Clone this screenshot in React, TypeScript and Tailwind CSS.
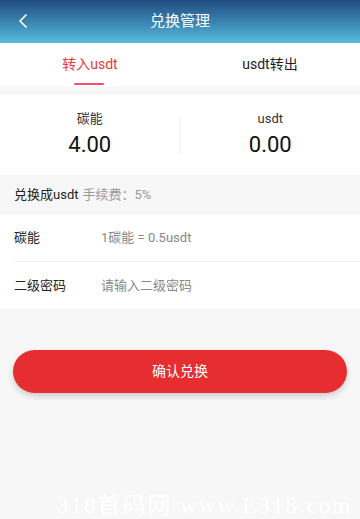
import { ChevronLeft } from 'lucide-react';

const font = { fontFamily: 'Roboto, "Noto Sans CJK SC", sans-serif' };

export default function App() {
  return (
    <div className="relative flex h-[519px] w-[360px] flex-col overflow-hidden bg-[#f7f7f7]" style={font}>
      <header className="relative flex h-[43px] items-center justify-center bg-gradient-to-b from-[#1f4c80] to-[#58bddf]">
        <ChevronLeft className="absolute left-[11px] top-[9px] h-[24px] w-[24px] text-white" strokeWidth={1.75} />
        <span className="text-[15px] text-white">兑换管理</span>
      </header>

      <nav className="flex h-[43px] bg-white">
        <div className="relative flex flex-1 items-center justify-center">
          <span className="text-[14px] text-[#e8383d]">转入usdt</span>
          <span className="absolute bottom-[1px] left-[74px] h-[2px] w-[30px] rounded-full bg-[#f0506a]" />
        </div>
        <div className="flex flex-1 items-center justify-center">
          <span className="text-[14px] text-[#222]">usdt转出</span>
        </div>
      </nav>

      <section className="mt-[9px] flex h-[80px] items-center bg-white">
        <div className="flex flex-1 flex-col items-center">
          <span className="text-[13px] leading-[18px] text-[#333]">碳能</span>
          <span className="mt-[2px] text-[22px] leading-[30px] text-[#111]">4.00</span>
        </div>
        <div className="h-[38px] w-px bg-[#f0f0f0]" />
        <div className="flex flex-1 flex-col items-center">
          <span className="text-[13px] leading-[18px] text-[#333]">usdt</span>
          <span className="mt-[2px] text-[22px] leading-[30px] text-[#111]">0.00</span>
        </div>
      </section>

      <div className="flex h-[40px] items-center px-[14px] text-[13px]">
        <span className="text-[#222]">兑换成usdt</span>
        <span className="ml-[4px] text-[#999]">手续费：5%</span>
      </div>

      <div className="bg-white pl-[14px]">
        <div className="flex h-[47px] items-center border-b border-[#f0f0f0] text-[13px]">
          <span className="w-[87px] text-[#222]">碳能</span>
          <span className="text-[#888]">1碳能 = 0.5usdt</span>
        </div>
        <div className="flex h-[47px] items-center text-[13px]">
          <span className="w-[87px] text-[#222]">二级密码</span>
          <input
            className="flex-1 bg-transparent text-[13px] text-[#333] outline-none placeholder:text-[#888]"
            placeholder="请输入二级密码"
            type="password"
          />
        </div>
      </div>

      <div className="px-[13px] pt-[41px]">
        <button
          type="button"
          className="flex h-[43px] w-full items-center justify-center rounded-full bg-[#e62d2f] text-[14px] text-white shadow-[0_3px_6px_rgba(0,0,0,0.18)]"
        >
          确认兑换
        </button>
      </div>

      <div
        className="absolute bottom-[-4px] left-[57px] whitespace-nowrap text-[23px] tracking-[2px] text-white"
        style={{ fontFamily: '"Liberation Serif", "Noto Sans CJK SC", serif' }}
      >
        318首码网 www.E318.com
      </div>
    </div>
  );
}
